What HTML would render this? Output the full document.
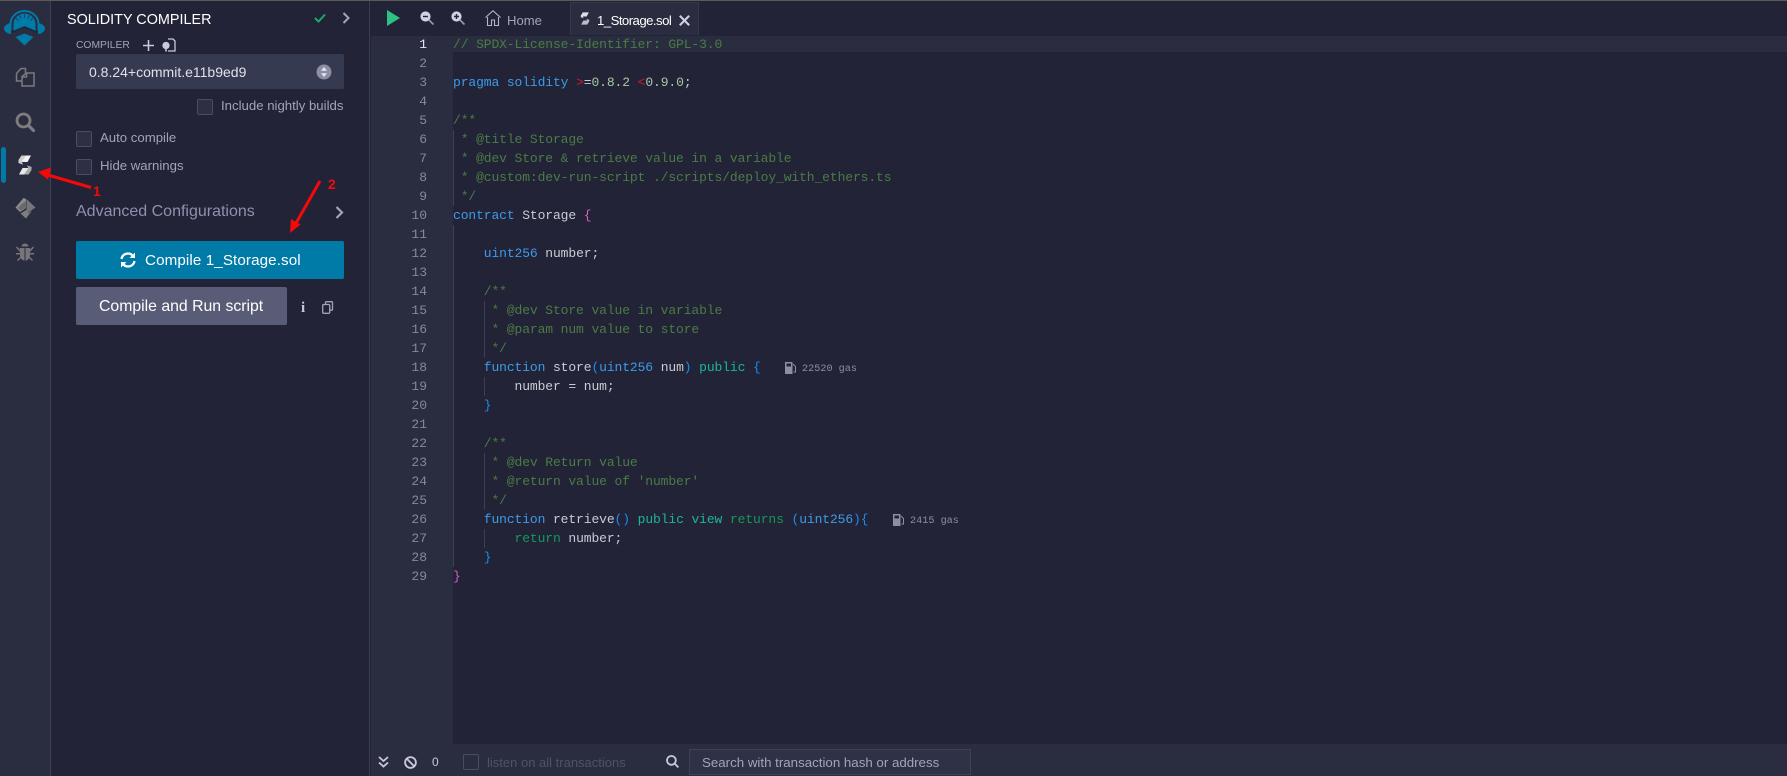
<!DOCTYPE html>
<html>
<head>
<meta charset="utf-8">
<style>
*{box-sizing:border-box}
html,body{margin:0;padding:0;width:1787px;height:776px;overflow:hidden;background:#222336;font-family:"Liberation Sans",sans-serif}
.a{position:absolute;white-space:nowrap}
svg{position:absolute;overflow:visible}
.cb{position:absolute;width:16px;height:16px;border:1px solid #4a4d62;background:#2d2f44;border-radius:2px}
.ln{position:absolute;left:370px;width:57px;text-align:right;font:13px/19px "Liberation Mono",monospace;color:#858999;height:19px}
.c{position:absolute;left:453px;font:13px/19px "Liberation Mono",monospace;letter-spacing:-.11px;white-space:pre;color:#c8ccd6;height:19px;margin:0}
.g{color:#4a7c45}.k{color:#3d9be9}.t{color:#1db59a}.r{color:#14995a}.x{color:#d5162e}.n{color:#a8c8a8}.p{color:#d65fc0}.b{color:#1b8cf0}
.gl{position:absolute;width:1px;background:#3d4052}
.gas{position:absolute;font:10.2px/14px "Liberation Mono",monospace;color:#8b8f9f;white-space:pre}
</style>
</head>
<body>
<div class="a" style="left:0;top:0;width:1787px;height:1px;background:#5a5a58"></div>

<!-- icon panel -->
<div class="a" style="left:0;top:1px;height:775px;background:#2a2c3f;border-right:1px solid #3d4052;width:51px"></div>
<svg style="left:0;top:0" width="50" height="50" viewBox="0 0 50 50">
<path d="M10.500 30v-6a14 13 0 0 1 28 0v6" fill="none" stroke="#007aa6" stroke-width="2"/>
<path d="M13.500 31v-7a11 10.500 0 0 1 22 0v7l-11-4.500z" fill="#007aa6"/>
<path d="M24.500 14v4M19.500 15l1.500 3.500M29.500 15L28 18.500M16 18l2.500 2.500M33 18l-2.500 2.500" stroke="#2a2c3f" stroke-width=".7"/>
<path d="M12.500 32l12-5 12 5" fill="none" stroke="#17293f" stroke-width="1.600"/>
<path d="M11 23c-3.500.5-7 2.500-7 5.500s3.500 5.500 7 5.500zM38 23c3.500.5 7 2.500 7 5.500s-3.500 5.500-7 5.500z" fill="#007aa6"/>
<path d="M15.500 37l9-3.500 9 3.500-9 8.500z" fill="#007aa6"/>
</svg>
<svg style="left:15px;top:67px" width="20" height="20" viewBox="0 0 20 20" fill="none" stroke="#7a7a7e" stroke-width="1.500">
<path d="M9 14H1.500V6.500L6 1.500h4.500V7"/><path d="M7 19V9.500L11.500 6H19v13z" fill="#2a2c3f"/><path d="M11.500 6v4H7"/>
</svg>
<svg style="left:15px;top:112px" width="20" height="20" viewBox="0 0 20 20" fill="none" stroke="#7d7d80">
<circle cx="8.500" cy="8.500" r="6.500" stroke-width="2.800"/><path d="M13.500 13.500l5 5" stroke-width="3.200" stroke-linecap="round"/>
</svg>
<div class="a" style="left:1px;top:147px;width:5px;height:36px;background:#007aa6;border-radius:3px"></div>
<svg style="left:18px;top:155px" width="14" height="20" viewBox="0 0 14 20">
<path d="M3.500 .5H13L9.500 7H3.500L5 9.500 .5 8V5.500z" fill="#f2f2f2"/>
<path d="M3.500 .5H8L3.500 7 5 9.500 .5 7.500V5z" fill="#cfcfcf"/>
<path d="M10.500 19.500H1L4.500 13h6L9 10.500l4.500 1.500v2.500z" fill="#e8e8e8"/>
<path d="M10.500 19.500H6L10.500 13 9 10.500l4.500 2v2.500z" fill="#a8a8a8"/>
</svg>
<svg style="left:15px;top:198px" width="21" height="21" viewBox="0 0 21 21">
<path d="M8.500 0 .5 9.500 5 14l6-4V1z" fill="#8c8c8e"/><path d="M6 6.500 11 3v6.500l-5.500 3L3 10z" fill="#6a6a6d"/><path d="M11.500 1 20.500 9.500 13 14.500 11.500 14z" fill="#767679"/>
<path d="M5.500 15.500 11 12l2 3 4-2.500-6 8z" fill="#7d7d80"/>
</svg>
<svg style="left:16px;top:243px" width="18" height="18" viewBox="0 0 18 18" fill="#76767a">
<path d="M5.500 3.500a3.500 3 0 0 1 7 0z"/><path d="M4 5h4.500v12.500C6 17.500 4 15 4 12zM9.500 5H14v7c0 3-2 5.500-4.500 5.500z"/>
<path d="M0 4.500l1-1 3 3v2.500zM18 4.500l-1-1-3 3v2.500zM0 10h4v1.500H0zM14 10h4v1.500h-4zM4.500 13.500l1 1L2 18l-1-1zM13.500 13.500l-1 1L16 18l1-1z"/>
</svg>

<!-- side panel -->
<div class="a" style="left:51px;top:1px;width:319px;height:775px;background:#222336;border-right:1px solid #3a3d50"></div>
<div class="a" style="left:67px;top:11px;font-size:14.400px;line-height:19px;color:#fff">SOLIDITY COMPILER</div>
<svg style="left:313px;top:12px" width="14" height="12" viewBox="0 0 14 12" fill="none" stroke="#1fa373" stroke-width="2"><path d="M2 6l3.500 3.500L12 2.500"/></svg>
<svg style="left:342px;top:12px" width="8" height="12" viewBox="0 0 8 12" fill="none" stroke="#a2a3bd" stroke-width="2"><path d="M1.500 1l5 5-5 5"/></svg>
<div class="a" style="left:76px;top:39px;font-size:10.300px;line-height:14px;color:#a2a3bd">COMPILER</div>
<svg style="left:143px;top:40px" width="11" height="11" viewBox="0 0 11 11" stroke="#c8c9dc" stroke-width="1.600"><path d="M5.500 0v11M0 5.500h11"/></svg>
<svg style="left:162px;top:38px" width="14" height="14" viewBox="0 0 14 14" fill="none" stroke="#c8c9dc" stroke-width="1.300"><path d="M6 1h5l2 2v10H6"/><circle cx="4" cy="7.500" r="3" fill="#c8c9dc"/><path d="M4 10.500v3" stroke-width="1.600"/></svg>
<div class="a" style="left:76px;top:54px;width:268px;height:35px;background:#363a50;border-radius:2px"></div>
<div class="a" style="left:89px;top:63px;font-size:14px;line-height:18px;color:#dfe0ee">0.8.24+commit.e11b9ed9</div>
<svg style="left:316px;top:64px" width="16" height="16" viewBox="0 0 16 16"><circle cx="8" cy="8" r="7.500" fill="#8b8ea6"/><path d="M8 3l3 3.800H5zM8 13l3-3.800H5z" fill="#e6e6ee"/></svg>

<div class="cb" style="left:197px;top:99px"></div>
<div class="a" style="left:221px;top:97px;font-size:13.200px;line-height:17px;color:#a2a3bd">Include nightly builds</div>
<div class="cb" style="left:76px;top:131px"></div>
<div class="a" style="left:100px;top:129px;font-size:13.200px;line-height:17px;color:#a2a3bd">Auto compile</div>
<div class="cb" style="left:76px;top:159px"></div>
<div class="a" style="left:100px;top:157px;font-size:13.200px;line-height:17px;color:#a2a3bd">Hide warnings</div>

<div class="a" style="left:76px;top:202px;font-size:16px;line-height:20px;color:#8f91ad">Advanced Configurations</div>
<svg style="left:335px;top:206px" width="9" height="13" viewBox="0 0 9 13" fill="none" stroke="#a2a3bd" stroke-width="2.200"><path d="M1.500 1l5.500 5.500L1.500 12"/></svg>

<div class="a" style="left:76px;top:241px;width:268px;height:38px;background:#007aa6;border-radius:2px"></div>
<svg style="left:120px;top:252px" width="16" height="16" viewBox="0 0 16 16" fill="none" stroke="#fff" stroke-width="2.300"><path d="M1.500 7A6.500 6.500 0 0 1 13 4"/><path d="M14.500 9A6.500 6.500 0 0 1 3 12"/><path d="M15 .5V6H9.500z" fill="#fff" stroke="none"/><path d="M1 15.500V10h5.500z" fill="#fff" stroke="none"/></svg>
<div class="a" style="left:145px;top:251px;font-size:15.200px;line-height:19px;color:#fff;letter-spacing:.1px">Compile 1_Storage.sol</div>
<div class="a" style="left:76px;top:287px;width:211px;height:38px;background:#595c76;border-radius:2px"></div>
<div class="a" style="left:99px;top:297px;font-size:15.800px;line-height:19px;color:#fff">Compile and Run script</div>
<div class="a" style="left:301px;top:299px;font:bold 15px/18px 'Liberation Serif',serif;color:#c8c9dc">i</div>
<svg style="left:322px;top:301px" width="11" height="13" viewBox="0 0 11 13" fill="none" stroke="#a2a3bd" stroke-width="1.300"><rect x="3.500" y=".7" width="7" height="8.500" rx="1"/><rect x=".7" y="3.500" width="7" height="8.800" rx="1" fill="#222336"/></svg>

<!-- editor top -->
<svg style="left:387px;top:10px" width="13" height="16" viewBox="0 0 13 16"><path d="M0 0l13 8-13 8z" fill="#2cc283"/></svg>
<svg style="left:420px;top:11px" width="14" height="14" viewBox="0 0 14 14" fill="none"><circle cx="5.500" cy="5.500" r="4.500" fill="#cfd0e0" stroke="#cfd0e0" stroke-width="1.200"/><path d="M3 5.500h5" stroke="#222336" stroke-width="1.400"/><path d="M9 9l4.500 4.500" stroke="#8f93ab" stroke-width="1.800"/></svg>
<svg style="left:451px;top:11px" width="14" height="14" viewBox="0 0 14 14" fill="none"><circle cx="5.500" cy="5.500" r="4.500" fill="#cfd0e0" stroke="#cfd0e0" stroke-width="1.200"/><path d="M3 5.500h5M5.500 3v5" stroke="#222336" stroke-width="1.400"/><path d="M9 9l4.500 4.500" stroke="#8f93ab" stroke-width="1.800"/></svg>
<svg style="left:485px;top:10px" width="16" height="16" viewBox="0 0 16 16" fill="none" stroke="#b5b6c6" stroke-width="1.100"><path d="M.5 7.500 8 .7l7.500 6.800"/><path d="M2.500 7v8.500h4V10h3v5.500h4V7"/></svg>
<div class="a" style="left:507px;top:12px;font-size:13.100px;line-height:17px;color:#a2a3bd">Home</div>
<div class="a" style="left:570px;top:2px;width:129px;height:33px;background:#2a2c3f;border:1px solid #35384c;border-bottom:0"></div>
<svg style="left:580px;top:12px" width="10" height="13" viewBox="0 0 14 20"><path d="M3.500 .5H13L9.500 7H3.500L5 9.500 .5 8V5.500z" fill="#dcdce2"/><path d="M10.500 19.500H1L4.500 13h6L9 10.500l4.500 1.500v2.500z" fill="#bcbcc4"/></svg>
<div class="a" style="left:597px;top:12px;font-size:13.200px;line-height:17px;color:#fff;letter-spacing:-.55px">1_Storage.sol</div>
<svg style="left:679px;top:15px" width="11" height="11" viewBox="0 0 11 11" stroke="#d0d1e0" stroke-width="2.100"><path d="M.8.800l9.400 9.400M10.200.800.800 10.200"/></svg>

<!-- gutter -->
<div class="a" style="left:371px;top:36px;width:82px;height:708px;background:#2a2c3f"></div>
<div class="a" style="left:453px;top:36px;width:1334px;height:16px;background:#2a2c3f"></div>

<div class="ln" style="top:35px;color:#e6e6ee">1</div><div class="ln" style="top:54px">2</div><div class="ln" style="top:73px">3</div><div class="ln" style="top:92px">4</div><div class="ln" style="top:111px">5</div><div class="ln" style="top:130px">6</div><div class="ln" style="top:149px">7</div><div class="ln" style="top:168px">8</div><div class="ln" style="top:187px">9</div><div class="ln" style="top:206px">10</div><div class="ln" style="top:225px">11</div><div class="ln" style="top:244px">12</div><div class="ln" style="top:263px">13</div><div class="ln" style="top:282px">14</div><div class="ln" style="top:301px">15</div><div class="ln" style="top:320px">16</div><div class="ln" style="top:339px">17</div><div class="ln" style="top:358px">18</div><div class="ln" style="top:377px">19</div><div class="ln" style="top:396px">20</div><div class="ln" style="top:415px">21</div><div class="ln" style="top:434px">22</div><div class="ln" style="top:453px">23</div><div class="ln" style="top:472px">24</div><div class="ln" style="top:491px">25</div><div class="ln" style="top:510px">26</div><div class="ln" style="top:529px">27</div><div class="ln" style="top:548px">28</div><div class="ln" style="top:567px">29</div>

<!-- guides -->
<div class="gl" style="left:453px;top:130px;height:76px"></div>
<div class="gl" style="left:453px;top:225px;height:342px"></div>
<div class="gl" style="left:484px;top:301px;height:57px"></div>
<div class="gl" style="left:484px;top:377px;height:19px"></div>
<div class="gl" style="left:484px;top:453px;height:57px"></div>
<div class="gl" style="left:484px;top:529px;height:19px"></div>

<!-- code -->
<pre class="c g" style="top:35px">// SPDX-License-Identifier: GPL-3.0</pre>
<pre class="c" style="top:73px"><span class="k">pragma solidity</span> <span class="x">&gt;</span>=<span class="n">0.8.2</span> <span class="x">&lt;</span><span class="n">0.9.0</span>;</pre>
<pre class="c g" style="top:111px">/**</pre>
<pre class="c g" style="top:130px"> * @title Storage</pre>
<pre class="c g" style="top:149px"> * @dev Store &amp; retrieve value in a variable</pre>
<pre class="c g" style="top:168px"> * @custom:dev-run-script ./scripts/deploy_with_ethers.ts</pre>
<pre class="c g" style="top:187px"> */</pre>
<pre class="c" style="top:206px"><span class="k">contract</span> Storage <span class="p">{</span></pre>
<pre class="c" style="top:244px">    <span class="k">uint256</span> number;</pre>
<pre class="c g" style="top:282px">    /**</pre>
<pre class="c g" style="top:301px">     * @dev Store value in variable</pre>
<pre class="c g" style="top:320px">     * @param num value to store</pre>
<pre class="c g" style="top:339px">     */</pre>
<pre class="c" style="top:358px">    <span class="k">function</span> store<span class="b">(</span><span class="k">uint256</span> num<span class="b">)</span> <span class="t">public</span> <span class="b">{</span></pre>
<pre class="c" style="top:377px">        number = num;</pre>
<pre class="c" style="top:396px">    <span class="b">}</span></pre>
<pre class="c g" style="top:434px">    /**</pre>
<pre class="c g" style="top:453px">     * @dev Return value</pre>
<pre class="c g" style="top:472px">     * @return value of 'number'</pre>
<pre class="c g" style="top:491px">     */</pre>
<pre class="c" style="top:510px">    <span class="k">function</span> retrieve<span class="b">()</span> <span class="t">public</span> <span class="t">view</span> <span class="r">returns</span> <span class="b">(</span><span class="k">uint256</span><span class="b">){</span></pre>
<pre class="c" style="top:529px">        <span class="r">return</span> number;</pre>
<pre class="c" style="top:548px">    <span class="b">}</span></pre>
<pre class="c" style="top:567px"><span class="p">}</span></pre>

<svg style="left:785px;top:362px" width="11" height="12" viewBox="0 0 11 12"><path d="M0 0h7.500v12H0z" fill="#8b8f9f"/><path d="M1.500 1.500h4.500v3H1.500z" fill="#222336"/><path d="M8 2l2.500 2.500v5.500h-2" fill="none" stroke="#8b8f9f"/></svg>
<div class="gas" style="left:802px;top:363px">22520 gas</div>
<svg style="left:893px;top:514px" width="11" height="12" viewBox="0 0 11 12"><path d="M0 0h7.500v12H0z" fill="#8b8f9f"/><path d="M1.500 1.500h4.500v3H1.500z" fill="#222336"/><path d="M8 2l2.500 2.500v5.500h-2" fill="none" stroke="#8b8f9f"/></svg>
<div class="gas" style="left:910px;top:515px">2415 gas</div>

<!-- bottom bar -->
<div class="a" style="left:371px;top:744px;width:1416px;height:32px;background:#2a2c3f"></div>
<svg style="left:378px;top:756px" width="11" height="12" viewBox="0 0 11 12" fill="none" stroke="#c8c9dc" stroke-width="1.800"><path d="M1 1l4.500 4L10 1M1 6.500l4.500 4 4.500-4"/></svg>
<svg style="left:404px;top:756px" width="13" height="13" viewBox="0 0 13 13" fill="none" stroke="#c8c9dc" stroke-width="1.800"><circle cx="6.500" cy="6.500" r="5.400"/><path d="M2.800 2.800l7.400 7.400"/></svg>
<div class="a" style="left:432px;top:755px;font-size:12px;line-height:15px;color:#c8c9dc">0</div>
<div class="cb" style="left:463px;top:754px;background:transparent"></div>
<div class="a" style="left:487px;top:755px;font-size:13px;line-height:16px;color:#4f5268">listen on all transactions</div>
<svg style="left:666px;top:755px" width="13" height="13" viewBox="0 0 13 13" fill="none" stroke="#c8c9dc" stroke-width="1.800"><circle cx="5.400" cy="5.400" r="4.400"/><path d="M8.800 8.800l3.600 3.600"/></svg>
<div class="a" style="left:689px;top:749px;width:282px;height:26px;background:#2f3247;border:1px solid #3d4052"></div>
<div class="a" style="left:702px;top:755px;font-size:13.300px;line-height:16px;color:#a2a3bd">Search with transaction hash or address</div>

<!-- annotations -->
<svg style="left:0;top:0" width="1787" height="776" viewBox="0 0 1787 776">
<path d="M91 187.500 48 175" stroke="#f50a0a" stroke-width="3"/><path d="M38 172l13-4.500-3 12z" fill="#f50a0a"/>
<path d="M320 181 295 225" stroke="#f50a0a" stroke-width="3"/><path d="M290 233l1-14 9.500 5.500z" fill="#f50a0a"/>
<text x="93" y="196" font-family="Liberation Sans" font-size="14" font-weight="bold" fill="#f50a0a">1</text>
<text x="328" y="189" font-family="Liberation Sans" font-size="14" font-weight="bold" fill="#f50a0a">2</text>
</svg>
</body>
</html>
